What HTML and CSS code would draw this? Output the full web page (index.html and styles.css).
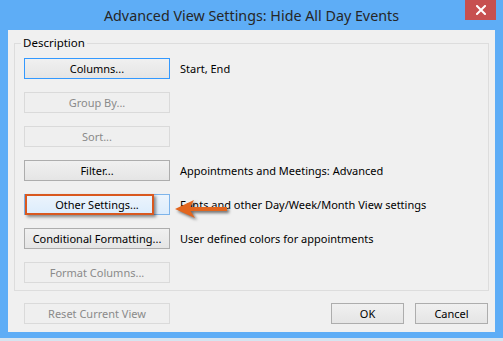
FILE: index.html
```html
<!DOCTYPE html>
<html>
<head>
<meta charset="utf-8">
<link rel="stylesheet" href="styles.css">
</head>
<body>
<div class="window">
  <div class="titlebar">
    <span class="title">Advanced View Settings: Hide All Day Events</span>
    <div class="close">
      <svg width="10" height="10" viewBox="0 0 10 10"><path d="M1 1L9 9M9 1L1 9" stroke="#fff" stroke-width="2" stroke-linecap="square"/></svg>
    </div>
  </div>
  <div class="client">
    <fieldset class="group">
      <legend class="legend">Description</legend>
      <div class="row"><div class="btn default">Columns...</div><span class="desc">Start, End</span></div>
      <div class="row"><div class="btn disabled">Group By...</div></div>
      <div class="row"><div class="btn disabled">Sort...</div></div>
      <div class="row"><div class="btn">Filter...</div><span class="desc">Appointments and Meetings: Advanced</span></div>
      <div class="row marked">
        <div class="btn hover">Other Settings...<span class="highlight"></span></div>
        <span class="desc">Fonts and other Day/Week/Month View settings</span>
        <svg class="arrow" width="60" height="28" viewBox="0 0 60 28"><path d="M1 13 L20 4 L16.5 11 L53 11 L53 15 L16.5 15 L21 22 Z" fill="#e2661f"/></svg>
      </div>
      <div class="row"><div class="btn">Conditional Formatting...</div><span class="desc">User defined colors for appointments</span></div>
      <div class="row"><div class="btn disabled">Format Columns...</div></div>
    </fieldset>
    <div class="footer">
      <div class="btn disabled">Reset Current View</div>
      <div class="actions">
        <div class="btn small">OK</div>
        <div class="btn small">Cancel</div>
      </div>
    </div>
  </div>
</div>
</body>
</html>
```
FILE: styles.css
```css
html, body {
  margin: 0;
  padding: 0;
}
body {
  width: 503px;
  height: 341px;
  background: #d6e4f0;
  font-family: "Noto Sans", "Open Sans", sans-serif;
  font-size: 11px;
  color: #000;
  overflow: hidden;
}
.window {
  position: relative;
  width: 503px;
  height: 338px;
  box-sizing: border-box;
  background: #5eadf6;
  padding: 0 8px 6px 8px;
  display: flex;
  flex-direction: column;
}
.titlebar {
  height: 30px;
  display: flex;
  align-items: center;
  justify-content: center;
}
.title {
  font-size: 14.3px;
  color: #262626;
  margin-top: 1px;
}
.close {
  position: absolute;
  top: 0;
  right: 7px;
  width: 31px;
  height: 20px;
  background: #c75050;
  display: flex;
  align-items: center;
  justify-content: center;
}
.client {
  flex: 1;
  background: #f0f0f0;
  padding: 5px 6px 0 6px;
  display: flex;
  flex-direction: column;
}
.group {
  margin: 0;
  border: 1px solid #dddddd;
  padding: 7px 9px 7px 9px;
  display: flex;
  flex-direction: column;
  gap: 13px;
}
.legend {
  padding: 0 2px;
  margin-left: -3px;
  line-height: 16px;
  font-size: 11.5px;
}
.row {
  position: relative;
  display: flex;
  align-items: center;
  gap: 10px;
  height: 21px;
}
.btn {
  position: relative;
  box-sizing: border-box;
  width: 146px;
  height: 21px;
  border: 1px solid #adadad;
  background: linear-gradient(#f0f0f0, #e5e5e5);
  display: flex;
  align-items: center;
  justify-content: center;
  line-height: 16px;
  color: #000;
  flex: none;
}
.btn.default {
  border-color: #3399ff;
}
.btn.disabled {
  border-color: #dadada;
  background: #efefef;
  color: #8a8a8a;
}
.btn.hover {
  border-color: #7eb4ea;
  background: linear-gradient(#ecf4fc, #dcecfc);
}
.highlight {
  position: absolute;
  left: 0;
  top: -1px;
  width: 129px;
  height: 21px;
  box-sizing: border-box;
  border: 2px solid #d9581f;
  box-shadow: 2px 2px 3px rgba(0, 0, 0, 0.45);
}
.arrow {
  position: absolute;
  left: 150px;
  top: 2px;
  filter: drop-shadow(2px 2px 1.5px rgba(0, 0, 0, 0.55));
}
.desc {
  white-space: nowrap;
}
.footer {
  margin-top: 12px;
  padding: 0 1px 0 10px;
  display: flex;
  justify-content: space-between;
}
.actions {
  display: flex;
  gap: 11px;
}
.btn.small {
  width: 73px;
}
```
